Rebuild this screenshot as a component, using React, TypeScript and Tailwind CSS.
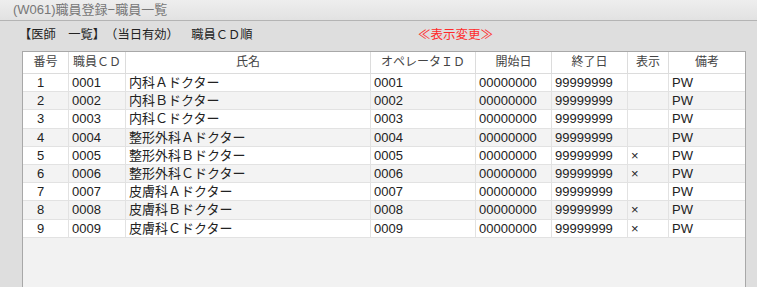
import React from "react";

const rows = [
  ["1", "0001", "内科Ａドクター", "0001", "00000000", "99999999", "", "PW"],
  ["2", "0002", "内科Ｂドクター", "0002", "00000000", "99999999", "", "PW"],
  ["3", "0003", "内科Ｃドクター", "0003", "00000000", "99999999", "", "PW"],
  ["4", "0004", "整形外科Ａドクター", "0004", "00000000", "99999999", "", "PW"],
  ["5", "0005", "整形外科Ｂドクター", "0005", "00000000", "99999999", "×", "PW"],
  ["6", "0006", "整形外科Ｃドクター", "0006", "00000000", "99999999", "×", "PW"],
  ["7", "0007", "皮膚科Ａドクター", "0007", "00000000", "99999999", "", "PW"],
  ["8", "0008", "皮膚科Ｂドクター", "0008", "00000000", "99999999", "×", "PW"],
  ["9", "0009", "皮膚科Ｃドクター", "0009", "00000000", "99999999", "×", "PW"],
];

const headers = ["番号", "職員ＣＤ", "氏名", "オペレータＩＤ", "開始日", "終了日", "表示", "備考"];
const widths = ["w-[46px]", "w-[57px]", "w-[245px]", "w-[105px]", "w-[76px]", "w-[76px]", "w-[41px]", "w-[76px]"];

export default function App() {
  return (
    <div
      className="w-[757px] h-[287px] overflow-hidden bg-[#dedede] text-[#222] [text-spacing-trim:space-all]"
      style={{ fontFamily: '"Liberation Sans", "Noto Sans CJK JP", sans-serif' }}
    >
      <div className="h-[21px] bg-gradient-to-b from-[#eeeeee] to-[#e2e2e2] border-b border-[#b4b4b4] pl-[13px] text-[13px] leading-[20px] text-[#777]">
        (W061)職員登録−職員一覧
      </div>
      <div className="flex h-[30px] items-center pl-[19px] text-[12.3px] pb-[2px]">
        <span className="w-[399px]">【医師　一覧】（当日有効）　職員ＣＤ順</span>
        <span className="text-[#ff2a2a] text-[12.5px]">≪表示変更≫</span>
      </div>
      <div className="ml-[22px] w-[724px] h-[260px] border border-[#a8a8a8] bg-[#f2f2f2]">
        <div className="flex h-[22px] bg-white border-b border-[#dcdcdc]">
          {headers.map((h, i) => (
            <div
              key={i}
              className={`${widths[i]} ${i < 7 ? "border-r border-[#dcdcdc]" : ""} shrink-0 text-center text-[12px] leading-[21px] text-[#444]`}
            >
              {h}
            </div>
          ))}
        </div>
        {rows.map((r, ri) => (
          <div
            key={ri}
            className={`flex h-[18.2px] border-b border-[#e2e2e2] ${ri % 2 === 0 ? "bg-white" : "bg-[#f3f3f3]"}`}
          >
            {r.map((c, i) => (
              <div
                key={i}
                className={`${widths[i]} ${i < 7 ? "border-r border-[#e2e2e2]" : ""} shrink-0 text-[13px] leading-[18px] whitespace-nowrap overflow-hidden ${i === 0 ? "pl-[14px]" : "pl-[3px]"} ${i === 6 ? "text-[11px]" : ""}`}
              >
                {c}
              </div>
            ))}
          </div>
        ))}
      </div>
    </div>
  );
}
